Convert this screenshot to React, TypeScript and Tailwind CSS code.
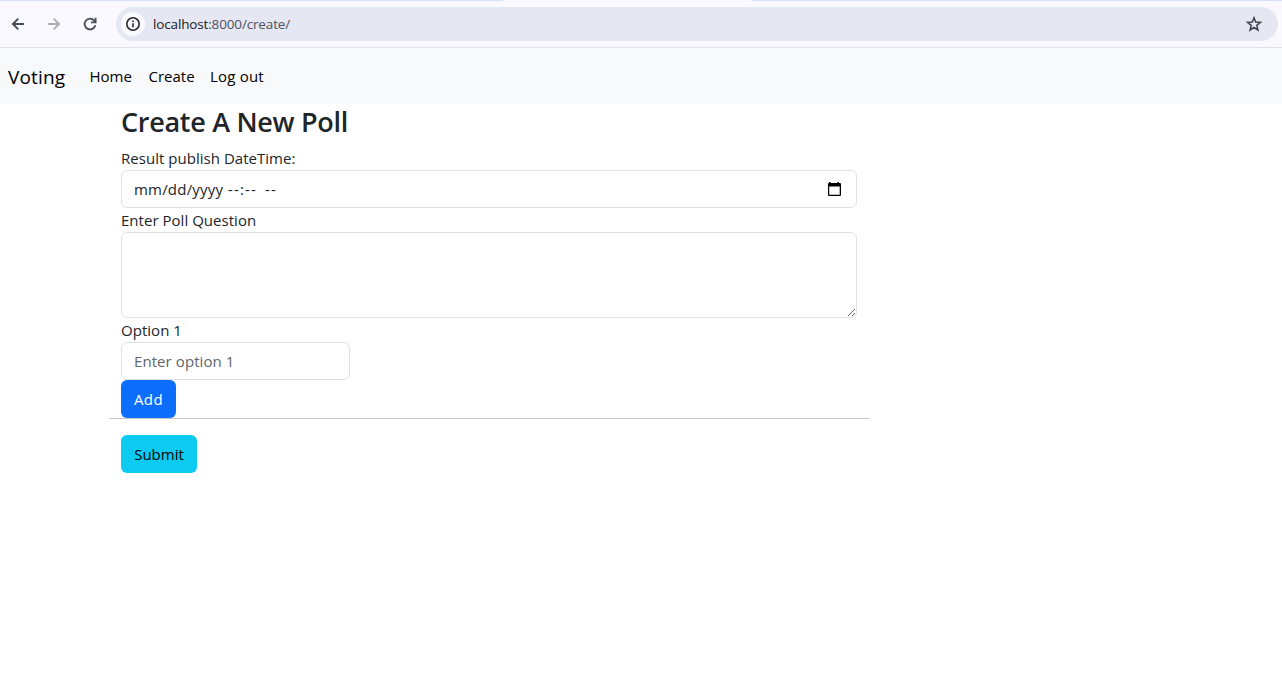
import React from "react";

function Toolbar() {
  return (
    <header className="h-12 shrink-0 bg-[#f9f9ff] border-b border-[#e2e1ea] flex flex-col">
      <div className="h-px shrink-0 flex justify-between">
        <div className="w-[503px] bg-[#d6e2fb]" />
        <div className="w-[530px] bg-[#d6e2fb]" />
      </div>
      <div className="flex items-center h-[46px] pr-1">
        <svg className="ml-2 w-5 h-5 shrink-0" viewBox="0 0 20 20" fill="none" stroke="#474a57" strokeWidth="1.9">
          <path d="M16 10H5M10.3 4.6 4.9 10l5.4 5.4" />
        </svg>
        <svg className="ml-4 w-5 h-5 shrink-0" viewBox="0 0 20 20" fill="none" stroke="#adadb3" strokeWidth="1.9">
          <path d="M4 10h11M9.7 4.6l5.4 5.4-5.4 5.4" />
        </svg>
        <svg className="ml-4 w-5 h-5 shrink-0" viewBox="0 0 20 20" fill="none" stroke="#474a57" strokeWidth="1.8">
          <path d="M15.3 11.2A5.4 5.4 0 1 1 14.2 6.6L15.6 8.2" />
          <path d="M15.6 3.8v4.6H11" />
        </svg>
        <div className="ml-4 h-[34px] flex-1 rounded-full bg-[#e5e7f3] flex items-center pl-[5px] pr-[14px]">
          <span className="w-6 h-6 rounded-full bg-[#f9f9ff] flex items-center justify-center">
            <svg className="w-4 h-4" viewBox="0 0 16 16" fill="none" stroke="#26272c" strokeWidth="1.6">
              <circle cx="8" cy="8" r="6.2" />
              <path d="M8 7.2v4M8 4.5v1.6" />
            </svg>
          </span>
          <span className="ml-2 text-[13.5px] leading-5 tracking-[-0.15px] text-[#50525b]">
            <span className="text-[#202125]">localhost</span>:8000/create/
          </span>
          <svg className="ml-auto w-5 h-5" viewBox="0 0 20 20" fill="none" stroke="#45464e" strokeWidth="1.6">
            <path d="m10 3.8 1.7 4.2 4.7.4-3.6 3 1.1 4.6-3.9-2.5L6.100 16l1.1-4.600-3.600-3L8.300 8Z" />
          </svg>
        </div>
      </div>
    </header>
  );
}

function Navbar() {
  return (
    <nav className="h-14 shrink-0 bg-[#f8f9fa] flex items-center pl-2 text-black whitespace-nowrap">
      <a className="w-[66px] mr-[15.5px] pt-px text-[19px] leading-[30px] tracking-[0.15px]">Voting</a>
      <a className="w-[43px] mr-4 text-[15px] leading-6">Home</a>
      <a className="w-[46px] mr-[15.5px] text-[15px] leading-6">Create</a>
      <a className="text-[15px] leading-6 tracking-[0.2px]">Log out</a>
    </nav>
  );
}

const label = "block h-6 text-[15px] leading-6 tracking-[0.03px] whitespace-nowrap";
const field = "block border border-[#dee2e6] rounded-md bg-white outline-none";

export default function App() {
  return (
    <div className="h-[678px] w-full overflow-hidden bg-white flex flex-col text-[#212529] font-['Open_Sans','Noto_Sans',sans-serif]">
      <Toolbar />
      <Navbar />
      <main className="ml-[109px] w-[760px]">
        <div className="px-3">
          <h3 className="h-[42px] pt-px text-[27px] leading-[34px] font-semibold tracking-[-0.3px] whitespace-nowrap">Create A New Poll</h3>
          <label className={label}>Result publish DateTime:</label>
          <div className={field + " h-[38px] px-3 flex items-center justify-between text-[15px] leading-6"}>
            <span className="flex whitespace-nowrap">
              <span className="w-[94px] tracking-[0.2px]">mm/dd/yyyy</span>
              <span className="w-[37px] tracking-[1.15px]">--:--</span>
              <span className="tracking-[1.15px]">--</span>
            </span>
            <svg className="w-5 h-5" viewBox="0 0 20 20" fill="none">
              <path fillRule="evenodd" fill="#000" d="M5 3h1.500v1h7V3H15v1h1q1 0 1 1v11q0 1-1 1H5q-1 0-1-1V5q0-1 1-1ZM5.200 7.500V15.800h10.500V7.500Z" />
            </svg>
          </div>
          <label className={label}>Enter Poll Question</label>
          <textarea className={field + " w-full h-[86px] px-3 py-1.5 text-[15px] leading-6 resize-y"} />
          <label className={label}>Option 1</label>
          <input
            className={field + " w-[229px] h-[38px] px-3 text-[15px] leading-6 tracking-[0.08px] placeholder:text-[#60666c]"}
            placeholder="Enter option 1"
          />
          <button className="block w-[55px] h-[38px] rounded-md bg-[#0d6efd] text-white text-[15px] leading-6 tracking-[0.4px]">Add</button>
        </div>
        <hr className="border-0 h-px bg-[#c7c8c9] mb-4" />
        <div className="px-3">
          <button className="block w-[76px] h-[38px] rounded-md bg-[#0dcaf0] text-black text-[15px] leading-6">Submit</button>
        </div>
      </main>
    </div>
  );
}
